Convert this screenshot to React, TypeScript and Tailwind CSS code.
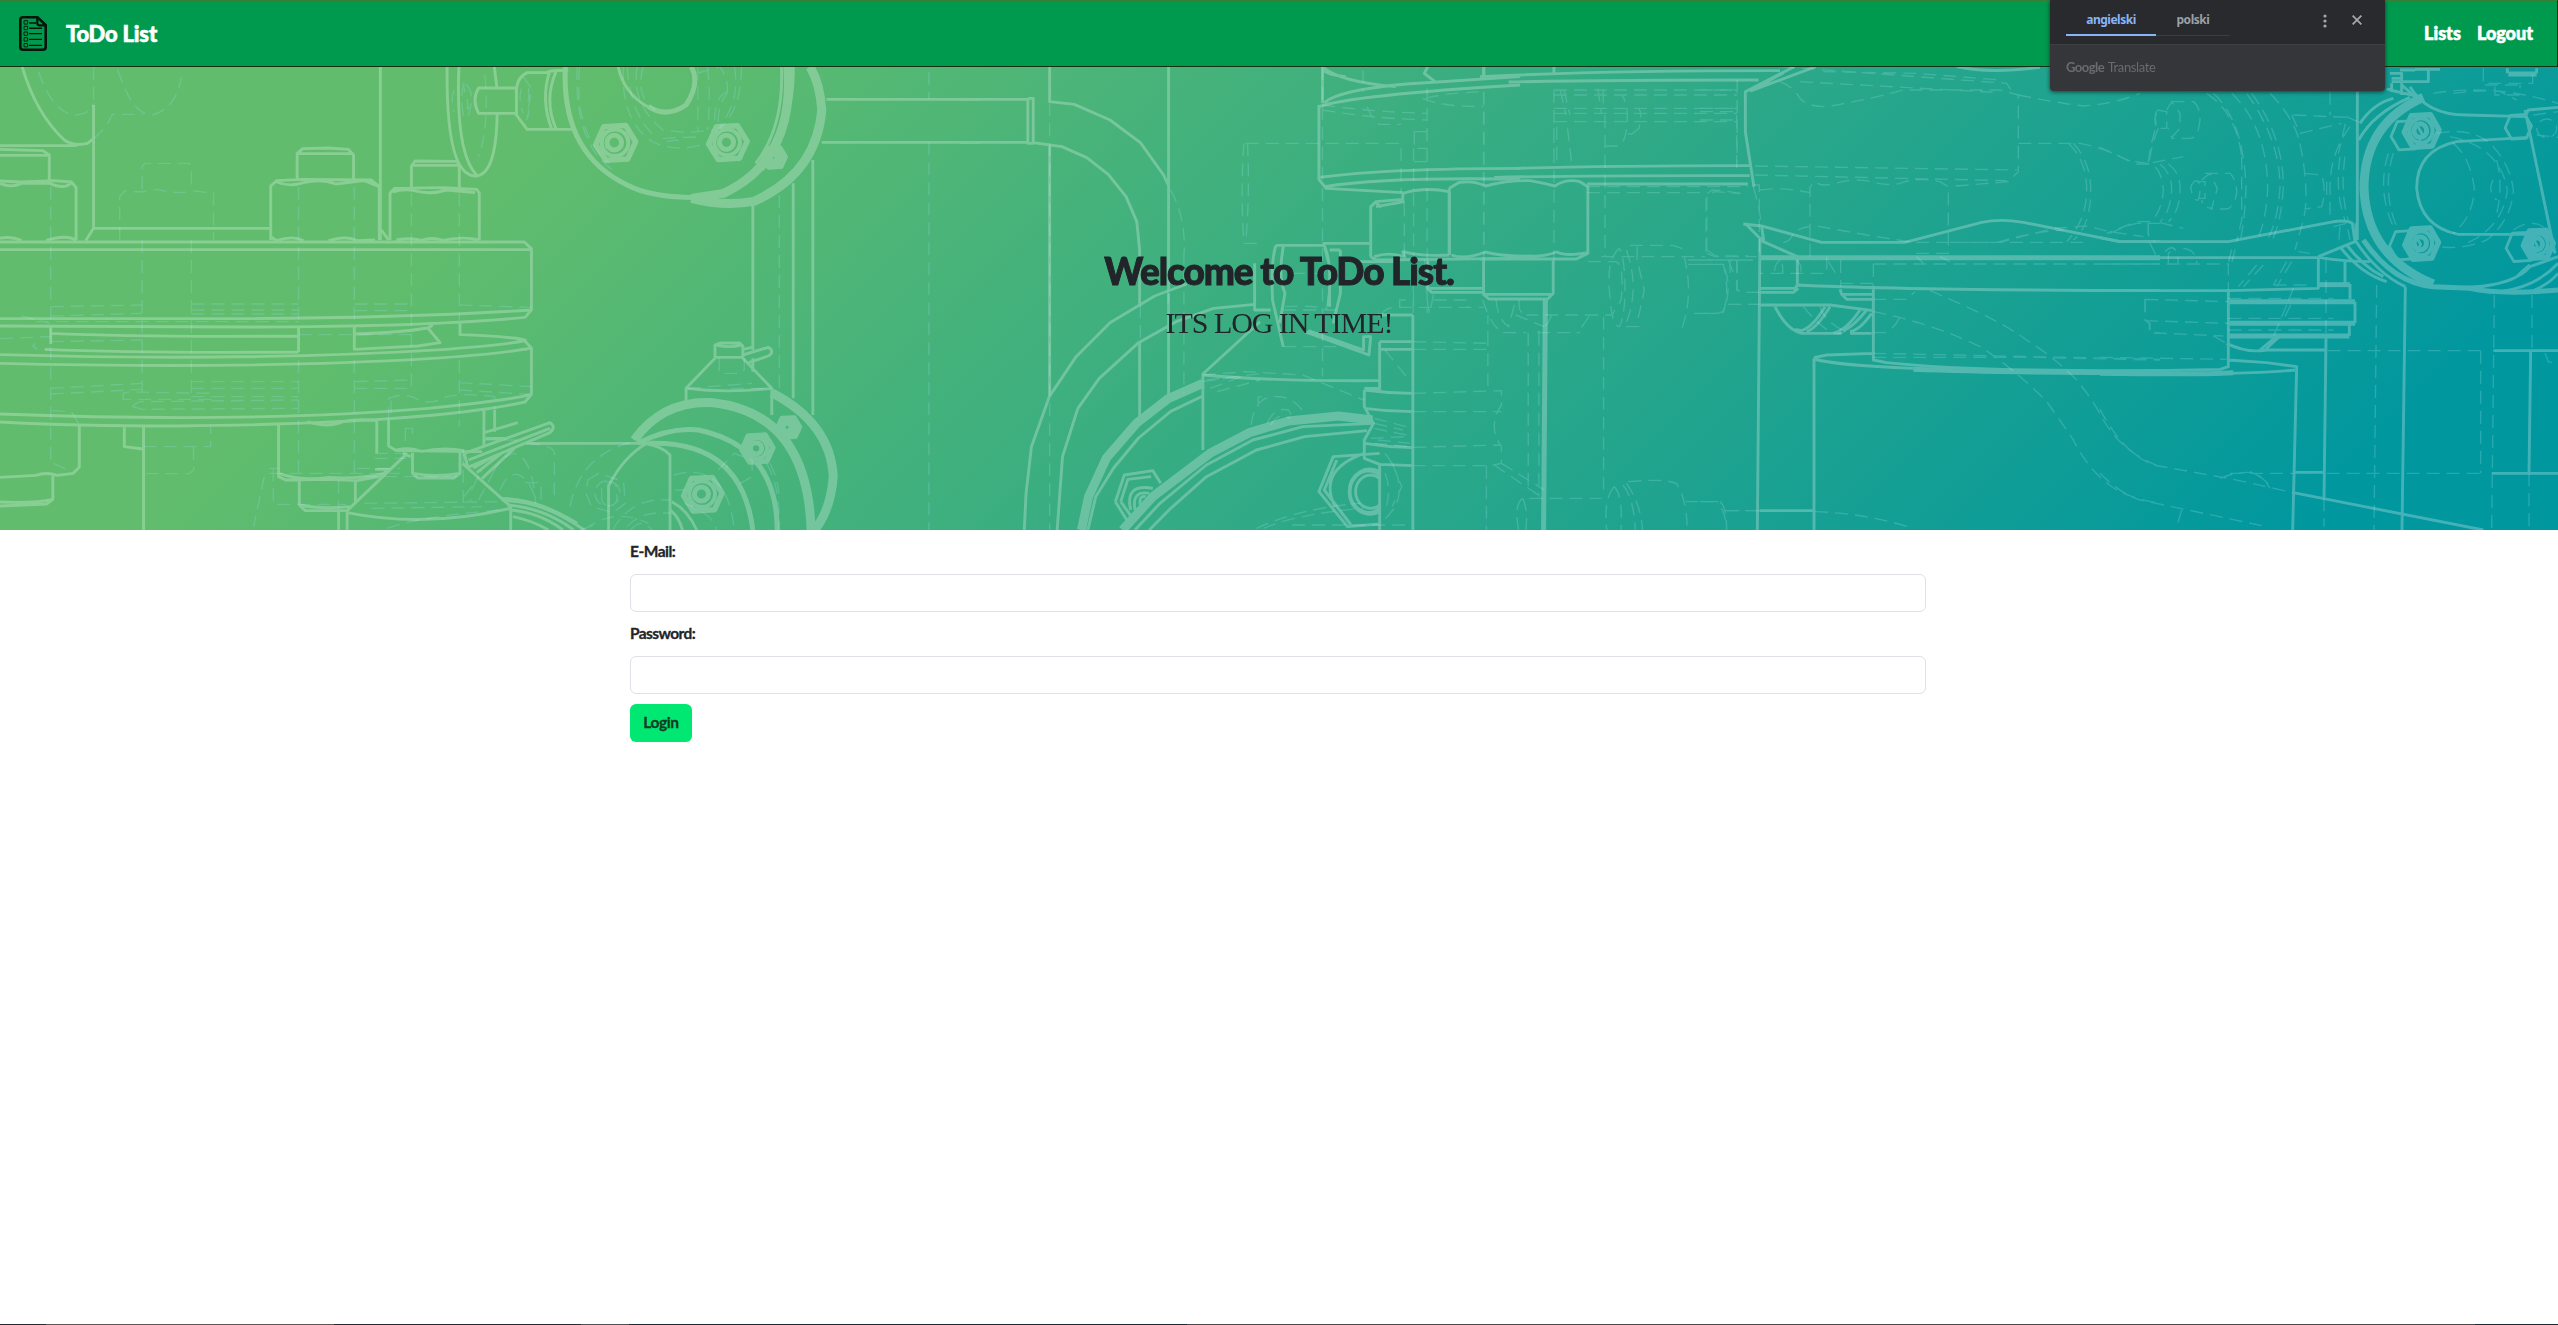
import type { ReactNode } from "react";

type Layer = { x: number; sx: number; thick?: string[]; bold?: string[]; line?: string[]; dash?: string[]; nuts?: number[][] };

// Each layer is one section of the blueprint, with its own origin and scale.
const layers: Layer[] = [
  {
    x: 0,
    sx: 2.8,
    line: [
      "M62 20Q100 160 180 240Q205 260 245 250L262 236 M0 257H215",
      "M262 135V505L240 542M262 505H758 M1065 20V540M1068 510L1088 540",
      "M0 268L120 272L138 285V360M0 286H138M0 363L60 366L150 362L200 366L213 382V540M0 370Q30 385 60 370L140 370Q180 390 200 368M0 535Q30 528 60 541M130 541Q190 522 213 542",
      "M832 358V280L848 266L920 264L975 268L990 285V358M832 281H990M758 540V378L775 362L850 358L1040 360L1062 380V540M775 366Q810 382 850 368Q900 355 940 372L1020 362L1062 380M758 530L775 542Q820 525 850 542M920 542Q970 525 1000 542L1050 540",
      "M1152 382V318L1162 303L1280 304L1286 318V382M1152 316H1286M1092 540V400L1105 385L1240 383L1335 388L1342 400V540M1100 396Q1130 385 1160 392Q1205 405 1250 390L1330 398M1110 540Q1150 532 1180 541Q1210 530 1240 541Q1300 528 1342 540",
      "M0 546H1468L1488 566V750L1470 772Q1200 800 700 801L0 798M0 569H1488M0 776H600Q1100 776 1488 750",
      "M142 802V852M142 820Q400 832 836 828M125 868Q400 880 836 876M836 800V876M992 796V868L1170 858L1232 848L1198 804L1212 795M992 822Q1120 818 1198 804",
      "M1288 790V824Q1400 828 1465 838L1488 864V1003L1470 1026Q1200 1090 500 1098Q200 1098 0 1086",
      "M0 884Q700 905 1250 868Q1440 852 1475 840M0 910Q700 928 1200 896Q1400 882 1488 864M0 1062Q700 1090 1200 1045Q1420 1022 1488 1003",
      "M222 1098V1222L205 1240L160 1246Q130 1235 100 1246L0 1252M148 1248V1318L130 1332L0 1338M0 1326Q100 1330 148 1318",
      "M348 1102V1160L400 1167M402 1100V1410",
      "M780 1095V1250L800 1260L920 1258L1000 1262L1060 1250L1090 1228H1050M780 1240Q850 1265 920 1252Q1000 1258 1080 1240M838 1262V1335L855 1352H970M838 1335Q900 1348 980 1340M995 1262V1330M1055 1080V1180M860 1085Q920 1105 960 1085Q1000 1075 1055 1082",
      "M1088 1080V1158L1110 1172L1350 1175M1355 1050V1160M1385 1050V1115M1155 1178V1240L1170 1254H1270L1288 1240V1178M1155 1240Q1220 1252 1288 1240M1110 1170Q1150 1160 1180 1175Q1240 1160 1300 1172",
      "M1140 1180L972 1352V1410M1295 1210L1430 1340V1410M948 1352V1410M972 1358Q1190 1405 1430 1345M1128 1180L1150 1190",
      "M1300 1180L1540 1088Q1558 1100 1540 1118L1310 1222L1300 1180M1312 1200L1540 1105M1355 1118L1450 1088M1360 1135H1420M1350 1255L1440 1165M1335 1238L1410 1175M1325 1225L1380 1190M1470 1150H1568",
      "M1252 20Q1248 340 1328 348Q1390 350 1392 160M1285 20Q1275 280 1335 346M1384 20L1392 88M1450 84H1340Q1320 120 1340 160H1450",
    ],
    dash: [
      "M108 35Q150 165 215 165Q255 160 262 130M262 20V135M330 30Q370 165 425 165Q490 150 508 52M262 235Q295 210 315 163H400",
      "M398 388V320L405 310H530L536 320V388M335 540V410L350 392Q390 400 440 388Q500 405 540 392L598 400V540M398 540V1000M536 540V1000",
      "M142 380V1220M836 380V800M992 380V800M836 900V1250M992 900V1250M1152 400V1000M1286 400V780M1286 900V1100",
      "M142 740L398 735M142 768L398 760M536 732H836M536 750H836M536 762H836M992 732H1150M992 752H1150M1286 735L1488 742M100 785H836M142 845L400 840M836 824H1150M60 768L140 790",
      "M142 985L398 970M142 1002L398 988M536 965H836M536 985H836M536 1010H836M992 965L1150 960M992 985H1150M1286 968L1488 980M1286 990L1480 1003M345 1020V1000L360 996L590 1000V1018H345M370 1038L390 1025L836 1020M370 1040L400 1048L836 1045",
      "M1088 1080V1015L1110 1008Q1150 1000 1180 1025Q1220 1030 1250 1010Q1300 998 1385 1010V1050M1095 1060V1015",
      "M402 1160H590V1100M542 1160V1230L530 1241H410M0 836L140 830M100 850L92 858L105 868M145 1052L200 1055L220 1090M150 1210L190 1230",
      "M755 1225H780M765 1225V1333H970M740 1250L710 1400M755 1240H1120M1050 1180H1140M1050 1195H1140M1000 1225H1120M1020 1250H1300M1020 1330L1400 1325M1040 1345L1350 1340M1085 1405Q1170 1370 1400 1350M948 1262V1350M1135 1105V1150M1135 1105H1155V1125",
      "M1297 1170V1330L1320 1320M1380 1240Q1400 1190 1440 1180Q1490 1190 1500 1330M1400 1290Q1420 1240 1450 1243Q1490 1260 1500 1330M1470 1268H1515V1330M1475 1150Q1552 1155 1552 1180V1320M1320 1290L1350 1230M1340 1320L1380 1240M1300 1310L1340 1250M1355 1140H1450",
      "M1358 45Q1370 200 1340 290M1300 70Q1285 110 1300 175Q1320 165 1320 110Q1318 80 1300 70M1272 90Q1260 120 1272 155",
      "M1460 85Q1450 120 1465 160M1465 50L1488 85L1475 180M1480 85V170",
    ],
  },
  {
    x: 420,
    sx: 2.8,
    thick: [
      "M760 415Q850 440 935 424Q1110 340 1125 150Q1120 70 1092 20",
      "M985 998Q1150 1090 1157 1250Q1150 1350 1105 1410",
      "M600 1140Q680 1020 820 1028Q1085 1060 1095 1410",
      "M1030 20Q1050 300 850 400L760 415",
    ],
    bold: [
      "M610 1150Q700 1100 780 1110Q1000 1160 1000 1410",
      "M640 1150Q900 1140 932 1410",
      "M760 20Q785 70 745 135Q690 175 640 140",
      "M407 20Q395 280 580 375Q650 415 790 412",
    ],
    line: [
      "M270 84Q275 50 300 38H360Q350 32 415 30M270 84V165L300 208H430M382 32Q345 120 382 210M362 38Q338 120 368 205",
      "M1012 20Q1020 200 940 310M1045 20Q1050 180 960 330",
      "M555 20Q570 100 640 142",
      "M1138 118H1568M1125 247H1568M932 430V870M932 895V935M1045 370V1015M1100 300V1065",
      "M826 892V855L840 849H895L904 858V892ZM826 895L745 985V1025M904 895L985 985V1065M745 985Q865 1000 985 985M904 868L930 862M904 885L975 862Q995 875 975 888L920 908M830 855Q865 865 900 855",
      "M528 1410V1278Q570 1190 635 1150M630 1150Q680 1160 700 1185V1410M310 1150H700",
      "M705 1325Q750 1350 775 1410M700 1350Q725 1370 735 1410",
      "M230 1322Q340 1320 460 1410M245 1335Q350 1345 430 1410M255 1350Q340 1360 400 1410M260 1370Q310 1380 360 1410M225 1315Q330 1315 440 1390",
    ],
    dash: [
      "M1425 35V118M1425 247V1410M1006 405V995M440 20Q430 250 540 330M447 20Q430 220 530 310",
      "M570 20Q560 180 650 245Q720 280 800 250M580 20Q590 170 660 230M880 20Q900 120 830 215M900 20Q900 150 840 205M608 20Q590 130 680 210L750 218L820 210M625 20Q600 110 660 150M805 20Q815 120 805 210M778 20V215M825 180Q825 110 860 95M835 185Q835 130 860 100M680 235L790 230M690 245L720 240L740 255",
      "M130 140Q145 170 120 70M775 40L840 20Q865 60 860 100",
      "M838 895V940H900L908 930V895M870 985H985M750 985L930 970M420 1340Q450 1180 600 1145M860 1215V1225M970 1210Q1010 1280 1005 1410M980 1210Q1000 1250 1005 1300",
      "M470 1260L500 1240L570 1265L575 1330L540 1358L480 1340L465 1300ZM490 1300A35 38 0 1 0 560 1300A35 38 0 1 0 490 1300M510 1302A22 26 0 1 0 550 1302A22 26 0 1 0 510 1302",
      "M460 1410Q540 1340 640 1390M540 1410Q590 1310 700 1320M580 1400Q620 1350 700 1360M590 1410Q620 1370 650 1410M710 1245Q860 1200 880 1410M740 1330Q820 1360 830 1410M835 1230L880 1180L930 1200V1250L880 1280M715 1290H740M450 1410L500 1390",
    ],
    nuts: [
      [548, 248, 62, 1],
      [862, 247, 60, 1],
      [792, 1302, 60, 1],
      [945, 1165, 48, 1],
      [1032, 1102, 34, 1],
      [992, 292, 34, 1],
    ],
  },
  {
    x: 960,
    sx: 2.8,
    thick: ["M680 970L583 1016L495 1089L410 1194L360 1310L340 1410", "M455 1410L540 1310L700 1180L810 1118L920 1083L1060 1068L1155 1080"],
    line: [
      "M0 118H190M0 247H190M190 115V250H205V115H190",
      "M251 20V125L320 133L420 180L505 248L570 345L583 375M584 20V690M205 248L285 260L355 293L415 343L465 410L495 485L503 570V735M251 255V1010M503 845V1080M584 700V1005",
      "M635 672L545 708L420 788L325 890L250 1010L200 1160L185 1300L180 1410M825 733L710 745L605 785L500 848L390 955L330 1045L287 1190L272 1410",
      "M680 1008L590 1054L500 1134L430 1224L380 1310L358 1410",
      "M490 1410L560 1330L690 1215L820 1140L960 1100L1155 1090M530 1410L590 1345L690 1250L830 1170L965 1130L1140 1112",
      "M840 785L680 942V1170M680 945Q900 965 1175 962",
      "M1175 1180L1045 1190L1005 1295L1085 1400L1175 1392M1055 1200L1020 1290L1095 1395M1132 1180Q1000 1230 1050 1340",
      "M1175 1245A52 62 0 1 0 1175 1345M1175 1255A42 50 0 1 0 1175 1335M1175 1235A58 68 0 1 0 1175 1355",
      "M1175 845V990M1175 1215V1410M1268 765V1410M1170 765H1268M1175 845H1268M1175 868H1268M1132 990Q1200 1000 1268 1000M1132 990V1040L1158 1090L1132 1140V1195L1175 1213L1268 1217M1132 1045Q1200 1055 1268 1055M1132 1150Q1200 1162 1268 1163M1132 985H1175",
      "M825 610V750H870M885 556H1020L1035 620V740M885 556Q870 600 875 720L905 860M905 560Q890 650 910 700L895 790M1020 555Q1045 620 1030 740M1065 570V700L1045 790M1035 570H1065M965 815L1145 885L1150 830L1130 830V870L975 812M1015 550H1150M1100 605H1230",
      "M1015 20V130M1020 128Q1060 90 1250 72L1568 50M1005 135V358L1025 385L1240 398M1005 140Q1100 105 1568 75M1005 352Q1200 325 1568 325M1020 380Q1200 350 1568 358M1015 20Q1060 65 1220 80M1015 30Q1030 45 1080 50M1330 65L1300 40L1310 20M1467 20V50",
      "M1150 590V440L1165 425L1240 418V395M1165 440L1245 425M1165 428L1180 442M1240 400Q1300 380 1370 395V585M1150 590L1165 600L1568 595M1160 590Q1200 575 1245 590L1240 575Q1290 590 1370 585M1310 600V685H1465M1310 685L1320 697H1470",
      "M435 1325L460 1245L540 1232L562 1270M450 1325L470 1258L535 1250M435 1325L470 1385M450 1325L480 1370M478 1350Q460 1270 540 1285M490 1350Q480 1290 530 1300M505 1335Q500 1305 520 1310",
    ],
    dash: [
      "M251 130V1410M505 735V845M627 575V1000M590 390Q635 480 627 590M583 690V740",
      "M800 250H1235V398M795 250Q785 400 795 550H850M805 250Q812 400 800 550M1015 385V950M1015 20V380",
      "M1128 30L1130 95M1140 140Q1160 190 1175 193H1235M1015 150Q1150 175 1308 180M1015 135Q1150 155 1308 160M1308 85V760M1467 95V600M1272 215V265H1308M1272 215H1308M1272 305H1308M1270 265V390M1244 430V600M1270 400V760",
      "M905 860H1065M680 945L800 935L960 945L1130 1020M700 985L800 945M720 995L840 960M690 960L850 940M680 965L780 950M910 740Q960 735 1030 745M930 640H1060M1190 870L1250 950M905 750H1060",
      "M815 1095Q825 1010 880 1010Q930 1005 965 1060M835 1040V1012L860 1005M860 1090Q880 1040 920 1050L930 1070M870 1095Q890 1055 925 1075",
      "M1160 1075L1250 1100M1160 1090L1240 1110M1160 1105L1250 1125M1150 1135L1250 1130M1170 1140L1260 1150M1160 1150L1260 1160",
      "M1190 1180Q1250 1260 1220 1340L1180 1390M1210 1210L1237 1280L1210 1340M830 1405Q950 1345 1120 1330M850 1405Q950 1360 1130 1345M930 1395H1250M1308 605V690M1190 1240Q1210 1290 1190 1350",
    ],
  },
  {
    x: 1280,
    sx: 2.8,
    bold: ["M743 720L738 1410"],
    line: [
      "M560 50Q900 32 1400 32M640 66Q900 60 1340 60M660 325Q900 318 1315 317M600 352Q900 346 1315 347M860 372H1310M570 20V50M767 20V40",
      "M474 385V585M474 385L500 368Q540 360 575 378Q640 360 700 362Q740 370 770 378Q800 355 840 365L862 380V580L830 597H560M480 585Q520 600 575 576Q620 590 700 588Q740 590 775 576Q800 590 862 578M570 600V700M765 600V700L750 717H585L570 703H765",
      "M1440 20L1303 95V215L1327 380M1500 20L1320 92L1410 38",
    ],
    dash: [
      "M373 845L582 850M373 868H582V765M582 820V995M373 1000L620 992V1035Q580 1100 620 1160V1210L590 1217H373M373 1055H620M373 1162L620 1155M578 1217V1410M600 1215L730 1310M620 1210L740 1290",
      "M695 818V1290M725 818V1310M906 770V1310M862 605H940Q965 610 955 720L930 765H690M670 720Q665 760 690 765M568 720Q590 800 625 818M605 720Q610 780 640 800L660 720M625 818H690M720 818H840M760 765Q750 800 720 818M865 770Q840 810 830 818M660 765L740 800",
      "M950 565Q910 600 925 720Q930 800 950 800Q970 760 965 640Q960 580 950 565M970 570Q1010 690 965 800H1005V820M1000 560V600L1020 690L1000 790M980 556H1100L1125 565Q1165 700 1120 820M1142 613H1240Q1270 680 1240 755L1225 760H1140M1142 600H1310M1280 600V690L1295 697H1340M1255 733H1340M1255 600L1270 640",
      "M668 1410Q655 1330 680 1315H900M680 1315Q695 1350 688 1410M935 1280Q905 1320 915 1410M935 1280Q960 1300 955 1410M960 1275Q990 1310 995 1410M970 1270Q1010 1330 1015 1410M975 1265Q1080 1255 1110 1270Q1140 1320 1140 1410M1135 1325H1225Q1250 1360 1250 1410M1250 1352H1340",
      "M767 90V600M767 105H1280M767 90H1280M767 145H1280M767 160H1280M767 185H1280M1280 60V310M910 165V590M905 90V130M890 85L900 160M785 90L800 165M795 90L812 165M805 205L818 320M910 258H945Q975 250 972 150Q965 110 955 105M985 222L1005 205Q1015 160 1005 145M985 222H975M767 205V300M775 200V300M860 380H1310M860 398H1200",
      "M570 95V600M400 115Q450 140 570 140M410 115Q450 100 570 95M373 600V760M405 600Q410 740 420 760L430 700M335 740V720H370M430 720H525V740M285 765Q290 745 320 742H570",
      "M1195 570V410L1215 395L1290 400M1195 570L1220 588H1310M900 590H1190",
    ],
  },
  {
    x: 1700,
    sx: 3,
    bold: ["M178 593H1380", "M640 928Q900 938 1380 938"],
    line: [
      "M180 530L172 1410M135 490L190 545L292 590V675M130 492L185 498L365 547H615L845 487Q900 475 970 487L1260 545H1380M185 500L192 548",
      "M178 685H285L292 675Q600 690 1380 692M178 697H280L295 685M420 688L425 703H520M425 703L440 718H520M178 735H390L520 752M520 685V900L560 908Q800 935 1380 932M342 895V1410M342 893L380 885L520 880M342 897Q400 915 640 925M178 1352H340",
      "M225 740Q260 810 305 820H425M450 820H515M375 740Q340 800 305 812L285 808M390 740Q350 805 320 815M480 750Q440 810 400 820M515 760Q480 810 450 815M500 750Q460 800 430 812",
      "M770 20Q870 42 1020 22",
    ],
    dash: [
      "M240 65Q280 80 300 115Q320 140 380 140Q500 120 610 90H900L955 105V335L925 365L745 380M245 20L920 70L940 100M300 65L900 98M370 35L650 40L900 60M165 318L950 330M165 345L920 362M955 105Q1050 125 1150 138Q1250 130 1320 100",
      "M955 250H1140Q1220 265 1280 300L1350 312M1105 250Q1160 300 1160 390Q1160 480 1100 545M1120 250Q1175 310 1172 400Q1170 500 1120 540",
      "M18 575V405L35 390L70 392L130 402M160 375H178V590M160 380Q180 450 185 500M180 390Q250 380 330 398M330 590V380L345 365Q360 380 400 372Q450 355 500 362Q560 380 600 370Q650 350 720 365L745 380V580H640M20 580L45 590H170M250 547Q270 545 280 520Q300 500 350 498L500 525L640 547H900L1060 505L1160 498L1230 515L1330 530M890 547Q1000 515 1090 510M750 547H1160",
      "M520 612H1380M520 612V680M380 590V640H180M422 600V680M240 600Q225 610 222 640H248Q250 610 240 600M290 600Q310 620 300 640M385 605L410 645M90 600V640H110M110 600V690L130 697H178M0 600H178M0 613H70Q90 690 70 758L60 760H0M85 733H178M650 590L670 610M720 590L750 605",
      "M420 670H520M520 718H620L645 695M310 740Q400 850 440 810M360 740Q370 780 430 812M520 818H560Q590 795 600 770",
      "M690 692Q900 780 980 840Q1060 890 1130 960Q1180 1020 1210 1080Q1270 1180 1380 1220M520 755Q700 790 850 865Q970 950 1040 1025Q1080 1080 1120 1140Q1170 1240 1250 1290Q1310 1320 1380 1330",
      "M520 880L1380 898M520 892L1000 892L1380 900M1335 718V780L1350 790V815L1380 820M345 1355Q500 1360 640 1405M0 1325H60Q80 1340 80 1410M75 1352H178M0 155H110V340M0 145H110M0 180H110M0 90H110",
      "M1370 160Q1360 180 1370 205M1365 210Q1350 260 1345 310M1230 520Q1270 500 1310 490H1380M1345 490V540L1370 590",
    ],
  },
  {
    x: 2100,
    sx: 3,
    thick: ["M970 112Q792 190 792 385Q800 590 1000 672"],
    bold: ["M655 674H750", "M385 725H765", "M765 790H385", "M385 828H748", "M1225 42H1310", "M790 540Q880 670 1000 680L1110 685Q1200 705 1374 690", "M0 940Q300 944 400 938"],
    line: [
      "M0 533L60 545H385L690 487Q740 478 757 490L765 545L655 590M0 593H655M0 692H385L655 685V595M655 592Q740 605 810 605M735 605V670M750 672V718M765 725V790M748 795V828M385 690V920L360 928L0 935M385 940Q500 938 585 930M385 900L500 908L590 920L578 1410M380 850Q440 880 500 870H678M480 870L530 828M495 870L540 828M678 835L672 1315M585 1237H672M580 1298L1150 1410M916 680L906 1410M1180 872H1374M1292 872L1287 1240M1175 1240H1374",
      "M772 95V540M768 490V540M880 115Q820 130 780 190M930 112Q820 160 776 240",
      "M765 540Q830 640 916 680M720 560Q780 640 860 665M740 555Q790 620 850 650",
      "M1110 685Q1250 670 1290 620L1374 590M1200 695Q1310 680 1374 610M1300 692Q1350 670 1374 640M1000 680Q1180 690 1250 650Q1270 630 1290 615",
      "M930 80Q980 165 1100 165L1275 170L1285 150L1374 142M1275 150L1365 580M1285 232L1070 245Q950 270 950 385Q960 500 1075 523H1345",
      "M870 40H905V105M875 55H905M875 65H985V30M870 90L965 112M945 28H1020M860 88H875V70M905 75L945 110M1222 25V40M1310 25V40M900 30H945",
    ],
    dash: [
      "M20 612H385V690M135 718V780L148 790V818L370 828M135 718L385 725M135 782L385 790M340 828L380 850M0 892L380 898",
      "M0 262Q80 300 110 312H155Q185 330 190 390Q185 460 150 485H110L20 520M180 312Q215 340 215 390Q210 460 180 485M205 312Q245 340 240 400Q235 460 205 485M175 205Q155 250 147 310L250 290M145 488V520Q150 540 165 545M180 488L250 505",
      "M170 150L200 155V205L175 205Q160 180 170 150M200 150L215 125L240 160V205L215 232L205 205M215 125H280Q300 140 300 180Q295 235 270 235H215M272 380Q285 355 295 365Q305 390 295 420Q278 425 272 380M290 365H315V415H295M305 360L330 340L352 385L335 445L310 440L305 420M315 340H390Q410 360 410 400Q400 445 380 447H330",
      "M320 100Q410 160 425 290M425 290V480L410 545M340 100Q430 180 438 380Q435 480 420 545M395 100Q500 200 503 380Q500 480 470 545M440 100Q540 240 540 380Q535 480 500 545M455 100Q550 230 550 380Q545 480 515 545M510 100Q580 170 600 250M600 250Q630 400 610 480L585 570M580 165L740 172L725 240L715 280M575 165L600 220L725 190M690 95V165M740 170L772 185M615 340L665 345Q680 390 665 440L615 447M680 365V420M690 365V480M720 290Q705 400 735 480M735 290Q720 400 745 480M750 200Q690 280 690 380",
      "M395 568L385 610M405 568L395 610M470 615L415 680M490 615L430 680M560 605L520 675M575 605L530 680M385 775H700M385 810H700M385 715H700M520 675H640M560 735L520 830M572 735L545 790M580 685L560 735M700 500L740 490L750 540M720 500L715 560M595 575L630 580M195 575Q230 540 235 610M250 565Q290 570 290 610M205 610V580L225 565",
      "M830 675L822 1410M1142 872V1240M1142 872H680M680 1240H1142M1183 705L1175 1410M1296 705V872M1287 1240V1410M672 1315V1400M678 600V830",
      "M865 280Q830 390 880 500M880 280Q845 390 890 500M1010 220Q1110 200 1170 250Q1230 310 1240 390Q1235 480 1160 540Q1090 570 1020 560M1050 230Q1200 260 1222 390Q1210 500 1100 550M1060 250Q1110 290 1123 385Q1120 470 1060 520M1190 300Q1210 380 1190 460M1180 360Q1160 390 1190 420",
      "M0 1048Q70 1180 160 1215L400 1258L580 1298M0 1240Q60 1300 120 1320L240 1345L500 1400M390 1240H580M360 1255Q420 1230 470 1240L520 1285M450 1235Q490 1250 510 1285M245 1350L230 1400",
      "M1000 100Q1180 70 1374 130M1150 25V70H1298V30M1155 75H1270M1185 80V105H1260V75M1060 100Q1150 88 1200 95L1250 120M1300 165L1374 155M1310 225L1374 232M1310 205A30 28 0 1 0 1370 205A30 28 0 1 0 1310 205M1240 510Q1290 475 1330 500M1335 880L1345 905L1374 912",
    ],
    nuts: [
      [920, 225, 52, 0],
      [965, 212, 58, 1],
      [915, 555, 52, 0],
      [965, 550, 56, 1],
      [1265, 560, 52, 0],
      [1315, 552, 50, 1],
      [1255, 200, 44, 0],
    ],
  },
];

const hex = (cx: number, cy: number, r: number) =>
  `M${cx - r} ${cy + r * 0.1}L${cx - r * 0.6} ${cy - r * 0.86}L${cx + r * 0.5} ${cy - r * 0.92}L${cx + r} ${cy - r * 0.05}L${cx + r * 0.6} ${cy + r * 0.88}L${cx - r * 0.5} ${cy + r * 0.95}Z`;

const oval = (cx: number, cy: number, r: number) =>
  `M${cx - r} ${cy}A${r} ${r * 1.07} 0 1 0 ${cx + r} ${cy}A${r} ${r * 1.07} 0 1 0 ${cx - r} ${cy}`;

function Section({ layer, children }: { layer: Layer; children: ReactNode }) {
  return <g transform={`translate(${layer.x} 60) scale(${1 / layer.sx} ${1 / 3})`}>{children}</g>;
}

function Stroke({ d, w, dash }: { d: string; w: number; dash?: string }) {
  return <path d={d} strokeWidth={w} strokeDasharray={dash} vectorEffect="non-scaling-stroke" />;
}

function Blueprint() {
  return (
    <svg viewBox="0 67 2558 463" preserveAspectRatio="none" className="absolute inset-0 h-full w-full" fill="none" aria-hidden="true">
      <g stroke="#93dbe0" opacity="0.27">
        {layers.map((l) => (
          <Section key={l.x} layer={l}>
            {l.dash?.map((d) => <Stroke key={d} d={d} w={1.4} dash="13 7" />)}
          </Section>
        ))}
      </g>
      <g stroke="#ffffff" opacity="0.26" strokeLinejoin="round">
        {layers.map((l) => (
          <Section key={l.x} layer={l}>
            {l.thick?.map((d) => <Stroke key={d} d={d} w={9} />)}
            {l.bold?.map((d) => <Stroke key={d} d={d} w={5} />)}
            {l.line?.map((d) => <Stroke key={d} d={d} w={2.9} />)}
            {l.nuts?.map(([cx, cy, r, full]) => (
              <g key={`${cx}-${cy}`}>
                <Stroke d={hex(cx, cy, r * 0.9)} w={full ? 5.5 : 2.8} />
                {full ? <Stroke d={oval(cx - 2, cy, r * 0.6)} w={4} /> : null}
                {full ? <Stroke d={oval(cx - 4, cy, r * 0.33)} w={5} /> : null}
              </g>
            ))}
          </Section>
        ))}
      </g>
    </svg>
  );
}

function Logo() {
  return (
    <svg viewBox="0 0 28 35" className="h-[35px] w-7" fill="none" stroke="#04140b" aria-hidden="true">
      <path d="M4 1.3H18.5L26.7 9V31Q26.7 33.7 24 33.7H4Q1.3 33.7 1.3 31V4Q1.3 1.3 4 1.3Z" strokeWidth="2.6" />
      <path d="M18.3 1.5V7Q18.3 9.3 20.5 9.3H26.5" strokeWidth="2.2" />
      <path d="M10 7H17M10 12.2H23M10 17.6H23M10 23.4H23M10 29.4H23" strokeWidth="1.4" />
      <path d="M5 4.7H8.6V8.1H5ZM5 10.3H8.6V13.7H5ZM5 16H8.6V19.4H5ZM5 21.7H8.6V25.1H5ZM5 27.5H8.6V30.9H5Z" strokeWidth="0.9" />
    </svg>
  );
}

function TranslatePopup() {
  return (
    <div className="absolute top-0 left-[2050px] h-[91px] w-[335px] overflow-hidden rounded-b bg-[#353639] shadow-[0_1px_4px_rgba(0,0,0,0.6)]">
      <div className="flex h-[45px] items-start border-b border-[#3f4043] bg-[#292a2d] pl-4 font-['Noto_Sans'] text-[12px] leading-[40px] font-bold">
        <div className="h-9 w-[90px] border-b-2 border-[#8ab4f8] text-center text-[#8ab4f8]">
          <span className="tracking-[-0.5px]">angielski</span>
        </div>
        <div className="h-9 w-[74px] border-b border-[#3c3d40] text-center text-[#9aa0a6]">
          <span className="tracking-[-0.45px]">polski</span>
        </div>
        <svg viewBox="0 0 4 14" className="mt-[14px] ml-[93px] h-[14px] w-1" fill="#a4a7ab">
          <circle cx="2" cy="2" r="1.6" />
          <circle cx="2" cy="7" r="1.6" />
          <circle cx="2" cy="12" r="1.6" />
        </svg>
        <svg viewBox="0 0 10 10" className="mt-[15px] ml-[25px] h-[10px] w-[10px]" stroke="#a4a7ab" strokeWidth="1.8">
          <path d="M0.6 0.6L9.4 9.4M9.4 0.6L0.6 9.4" />
        </svg>
      </div>
      <p className="pl-4 font-['Lato'] text-[13px] leading-[45px] text-[#6a6b6e]">
        <span className="font-bold tracking-[-0.5px]">Google</span> <span className="tracking-[-0.35px]">Translate</span>
      </p>
    </div>
  );
}

function Field({ id, label, type, tracking }: { id: string; label: string; type: string; tracking: string }) {
  return (
    <div className="flex h-[82px] flex-col">
      <label htmlFor={id} className={`mt-[9px] h-[35px] leading-6 [-webkit-text-stroke:0.3px] ${tracking}`}>
        {label}
      </label>
      <input id={id} type={type} className="h-[38px] w-full rounded-md border border-[#dee2e6] bg-white px-3 outline-none" />
    </div>
  );
}

export default function App() {
  return (
    <div className="relative flex h-[1325px] w-full flex-col overflow-hidden bg-white font-['Lato',sans-serif] text-[#212529]">
      <header className="flex h-[67px] shrink-0 items-center border-t border-r border-b border-t-[#3a7d35] border-r-[#14320f] border-b-[#14320f] bg-[#009a4e] pr-6 pl-[19px] font-black text-white [-webkit-text-stroke:0.6px]">
        <Logo />
        <span className="ml-[19px] text-[22px] tracking-[-0.2px]">ToDo List</span>
        <nav className="ml-auto flex gap-4 text-[18px]">
          <a>Lists</a>
          <a>Logout</a>
        </nav>
      </header>

      <section className="relative h-[463px] shrink-0 bg-[linear-gradient(135deg,#61bd6d_20%,#00979f_92%)]">
        <Blueprint />
        <div className="relative flex flex-col items-center pt-[180px]">
          <h1 className="text-[37px] leading-[48px] font-black tracking-[-1.1px] whitespace-nowrap [-webkit-text-stroke:0.9px]">Welcome to ToDo List.</h1>
          <p className="mt-1 font-['Liberation_Serif'] text-[30px] leading-[48px] tracking-[-1.05px] whitespace-nowrap">ITS LOG IN TIME!</p>
        </div>
      </section>

      <form className="mx-auto w-[1296px] -translate-x-px text-[15.5px] font-bold">
        <Field id="email" label="E-Mail:" type="email" tracking="tracking-[-0.5px]" />
        <Field id="password" label="Password:" type="password" tracking="tracking-[-0.6px]" />
        <button type="button" className="mt-[10px] h-[38px] w-[62px] rounded-md bg-[#00e871] tracking-[-0.4px] text-[#0e3b24] [-webkit-text-stroke:0.3px]">
          Login
        </button>
      </form>

      <div className="mt-auto flex h-px shrink-0">
        <div className="w-[46px] bg-[#252b30]" />
        <div className="w-[288px] bg-[#5c5856]" />
        <div className="w-[247px] bg-[#252b30]" />
        <div className="w-12 bg-[#4d5256]" />
        <div className="w-[558px] bg-[#1c2a33]" />
        <div className="flex-1 bg-[#484a4c]" />
        <div className="w-[83px] bg-[#1c2a33]" />
      </div>

      <TranslatePopup />
    </div>
  );
}
